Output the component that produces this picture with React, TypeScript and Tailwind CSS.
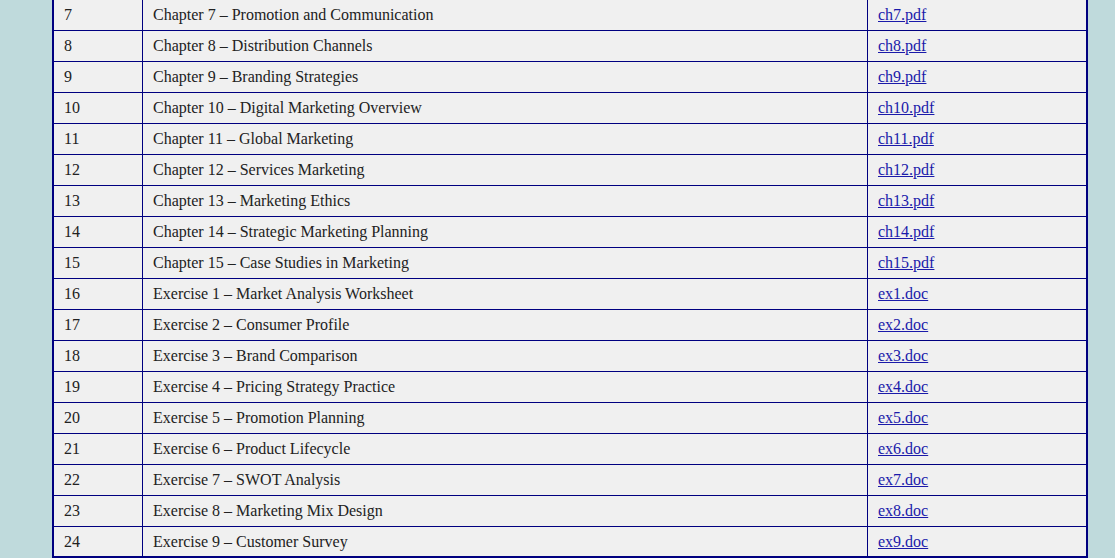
import React from "react";

const rows: [number, string, string][] = [
  [7, "Chapter 7 – Promotion and Communication", "ch7.pdf"],
  [8, "Chapter 8 – Distribution Channels", "ch8.pdf"],
  [9, "Chapter 9 – Branding Strategies", "ch9.pdf"],
  [10, "Chapter 10 – Digital Marketing Overview", "ch10.pdf"],
  [11, "Chapter 11 – Global Marketing", "ch11.pdf"],
  [12, "Chapter 12 – Services Marketing", "ch12.pdf"],
  [13, "Chapter 13 – Marketing Ethics", "ch13.pdf"],
  [14, "Chapter 14 – Strategic Marketing Planning", "ch14.pdf"],
  [15, "Chapter 15 – Case Studies in Marketing", "ch15.pdf"],
  [16, "Exercise 1 – Market Analysis Worksheet", "ex1.doc"],
  [17, "Exercise 2 – Consumer Profile", "ex2.doc"],
  [18, "Exercise 3 – Brand Comparison", "ex3.doc"],
  [19, "Exercise 4 – Pricing Strategy Practice", "ex4.doc"],
  [20, "Exercise 5 – Promotion Planning", "ex5.doc"],
  [21, "Exercise 6 – Product Lifecycle", "ex6.doc"],
  [22, "Exercise 7 – SWOT Analysis", "ex7.doc"],
  [23, "Exercise 8 – Marketing Mix Design", "ex8.doc"],
  [24, "Exercise 9 – Customer Survey", "ex9.doc"],
];

export default function App() {
  return (
    <div
      className="w-full h-[558px] overflow-hidden bg-[#bfdadc]"
      style={{ fontFamily: '"Liberation Serif", "Times New Roman", serif' }}
    >
      <div className="ml-[52px] w-[1036px] border-x-2 border-b-2 border-[#000080] bg-[#f0f0f0] text-[16px] text-[#222]">
        {rows.map(([n, title, file], i) => (
          <div
            key={n}
            className={`flex ${i < rows.length - 1 ? "h-[31px] border-b border-[#000080]" : "h-[29px]"}`}
          >
            <div className="w-[89px] shrink-0 flex items-center pl-[10px] border-r border-[#000080]">
              {n}
            </div>
            <div className="w-[725px] shrink-0 flex items-center pl-[10px] border-r border-[#000080]">
              {title}
            </div>
            <div className="flex-1 flex items-center pl-[10px]">
              <a href="#" className="underline text-[#1a1aaa]">
                {file}
              </a>
            </div>
          </div>
        ))}
      </div>
    </div>
  );
}
